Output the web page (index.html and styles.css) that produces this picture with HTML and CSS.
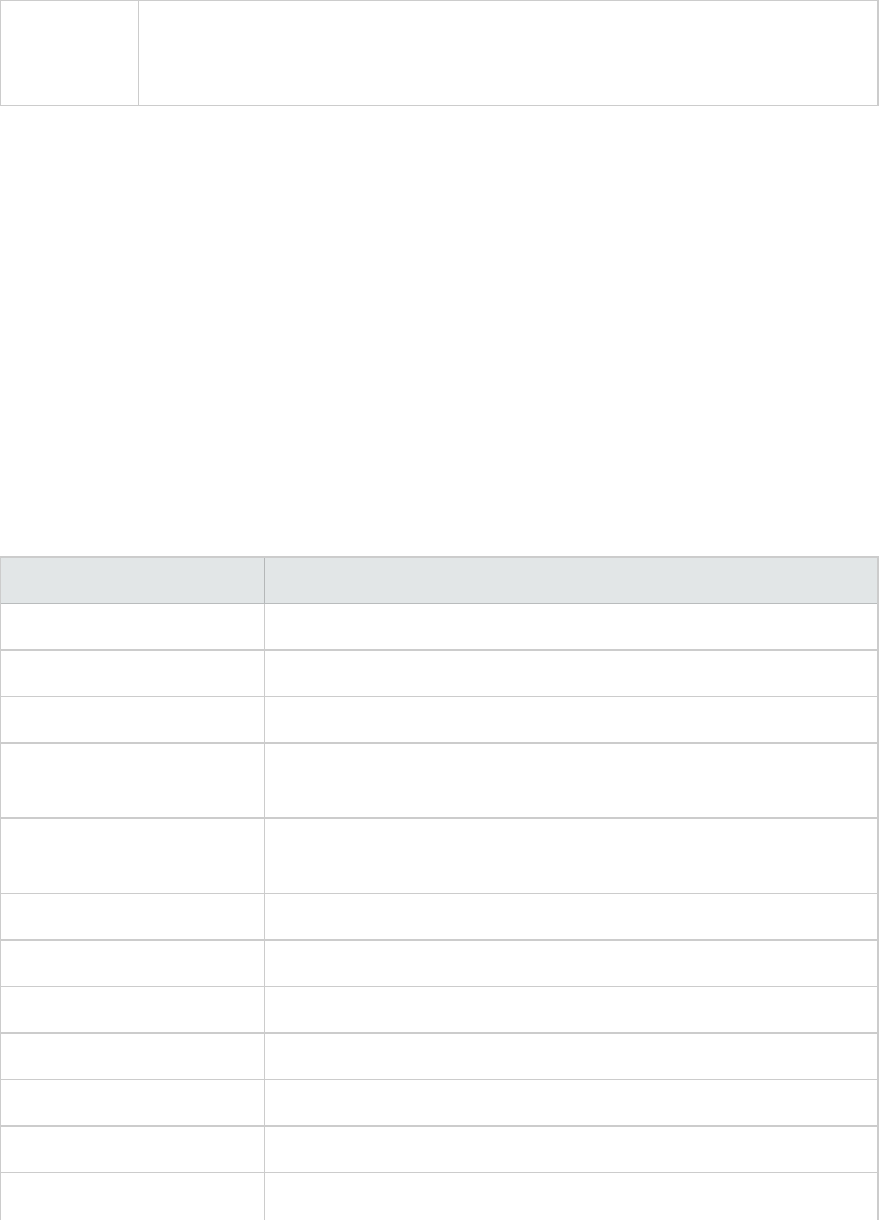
FILE: index.html
```html
<!DOCTYPE html>
<html>
<head>
<meta charset="utf-8">
<link rel="stylesheet" href="styles.css">
</head>
<body>
<div class="tbl tbl-top">
  <div class="row row-top">
    <div class="cell c1"></div>
    <div class="cell c2"></div>
  </div>
</div>
<div class="tbl tbl-main">
  <div class="row head">
    <div class="cell c1"></div>
    <div class="cell c2"></div>
  </div>
  <div class="row thick"><div class="cell c1"></div><div class="cell c2"></div></div>
  <div class="row thin"><div class="cell c1"></div><div class="cell c2"></div></div>
  <div class="row thick"><div class="cell c1"></div><div class="cell c2"></div></div>
  <div class="row thick tall"><div class="cell c1"></div><div class="cell c2"></div></div>
  <div class="row thin tall2"><div class="cell c1"></div><div class="cell c2"></div></div>
  <div class="row thick"><div class="cell c1"></div><div class="cell c2"></div></div>
  <div class="row thin"><div class="cell c1"></div><div class="cell c2"></div></div>
  <div class="row thick"><div class="cell c1"></div><div class="cell c2"></div></div>
  <div class="row thin"><div class="cell c1"></div><div class="cell c2"></div></div>
  <div class="row thick"><div class="cell c1"></div><div class="cell c2"></div></div>
  <div class="row thin"><div class="cell c1"></div><div class="cell c2"></div></div>
  <div class="row last"><div class="cell c1"></div><div class="cell c2"></div></div>
</div>
</body>
</html>
```
FILE: styles.css
```css
html, body {
  margin: 0;
  padding: 0;
  background: #ffffff;
  font-family: "Open Sans", "Liberation Sans", sans-serif;
}
.tbl {
  width: 879px;
  box-sizing: border-box;
  border-left: 1px solid #cccccc;
  border-right: 2px solid #cccccc;
}
.tbl-top {
  border-top: 1px solid #cccccc;
  border-bottom: 1px solid #cccccc;
}
.row {
  display: flex;
  box-sizing: content-box;
}
.cell {
  box-sizing: border-box;
}
.tbl-top .c1 { width: 137px; }
.tbl-top .c2 { flex: 1; border-left: 1px solid #cccccc; }
.row-top { height: 104px; }

.tbl-main {
  margin-top: 450px;
  border-top: 2px solid #cccccc;
}
.tbl-main .c1 { width: 263px; }
.tbl-main .c2 { flex: 1; border-left: 1px solid #cccccc; }
.head {
  height: 45px;
  background: #e2e6e7;
  border-bottom: 1px solid #b9bcbd;
}
.head .c2 { border-left-color: #b4b7b8; }
.row.thick, .row.thin { height: 45px; }
.thick { border-bottom: 2px solid #cccccc; }
.thin { border-bottom: 1px solid #cccccc; }
.row.tall { height: 73px; }
.row.tall2 { height: 74px; }
.row.last { height: 47px; }
```
